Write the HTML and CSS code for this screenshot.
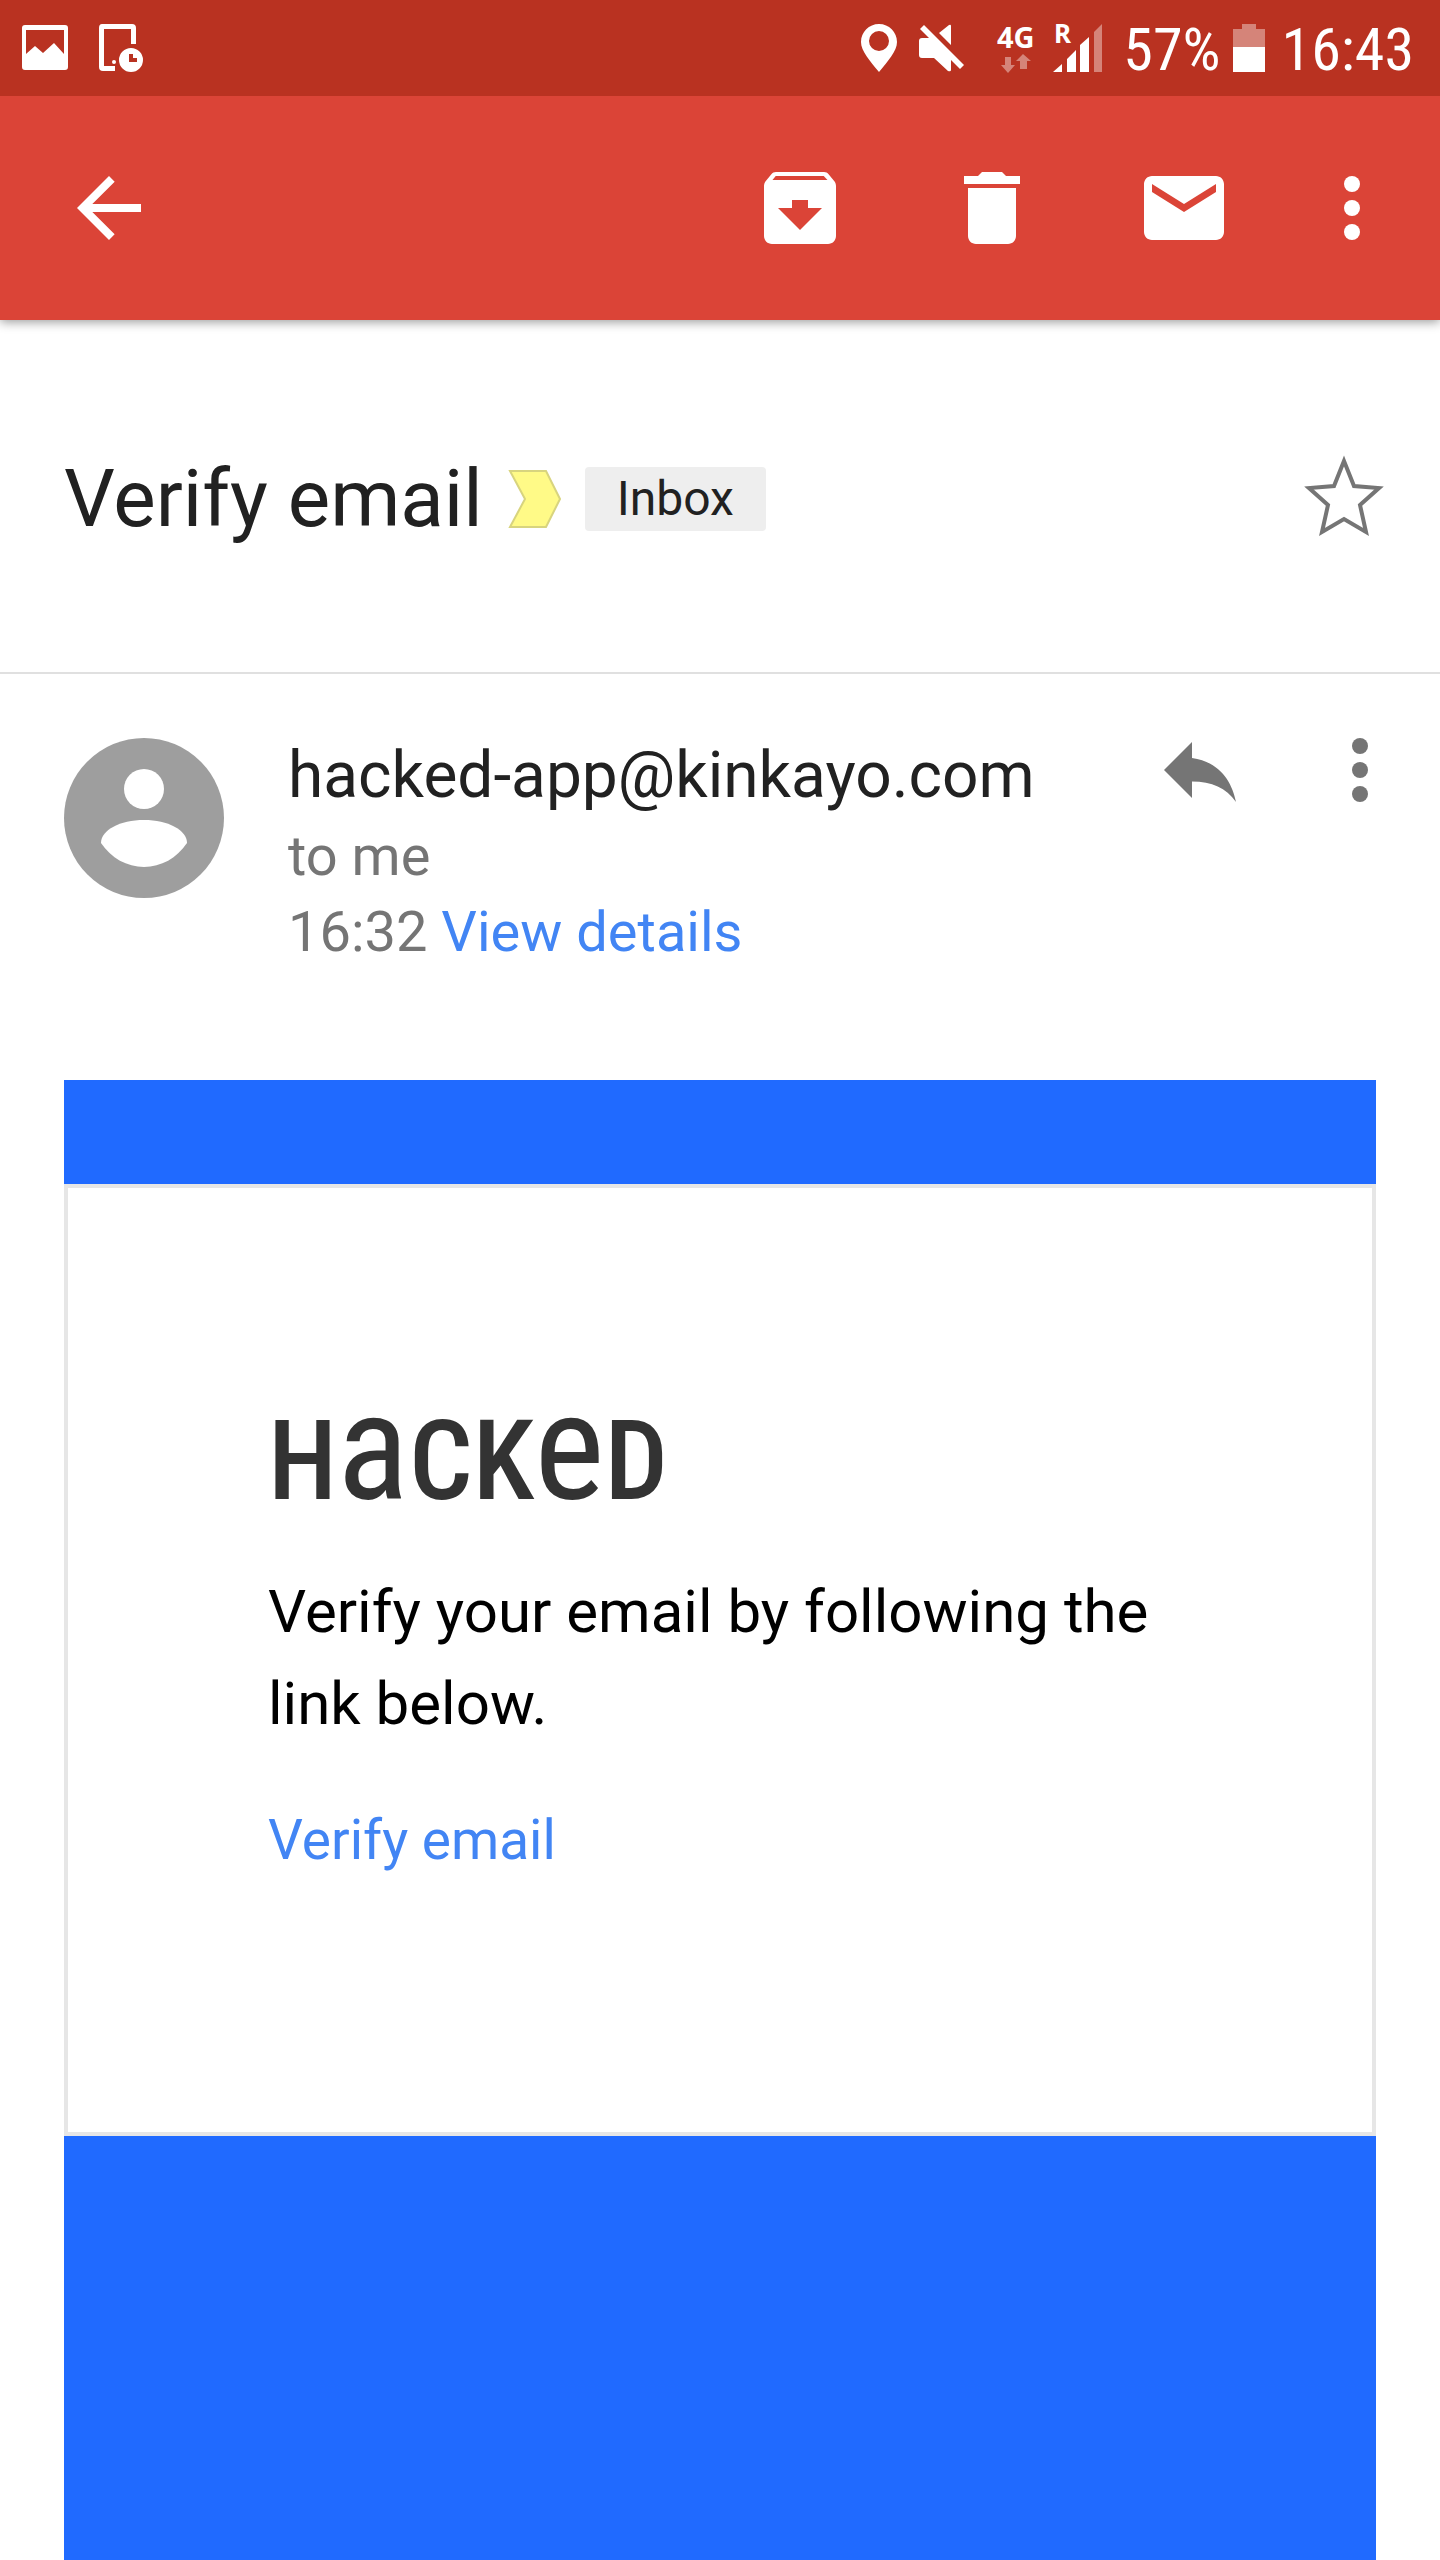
FILE: index.html
```html
<!DOCTYPE html>
<html lang="en">
<head>
<meta charset="utf-8">
<meta name="viewport" content="width=device-width">
<title>Verify email</title>
<link rel="stylesheet" href="styles.css">
</head>
<body>
<div class="status">
  <div class="status-group status-notices">
    <svg width="48" height="48" viewBox="0 0 48 48" fill="#fff"><path fill-rule="evenodd" d="M4 1h40q3 0 3 3v39q0 3-3 3H4q-3 0-3-3V4q0-3 3-3zM5 6v24l9-8 8 7 11-10 10 11V6z"/></svg>
    <svg width="48" height="48" viewBox="0 0 48 48" fill="#fff"><path d="M5 0h30q4 0 4 4v16h-5V5H7v37h11v5H6q-4 0-4-4V4q0-4 3-4z"/><circle cx="17" cy="38" r="2"/><path fill-rule="evenodd" d="M34 24a12 12 0 1 1 0 24 12 12 0 0 1 0-24zm-2 6v8h8v-4h-4v-4z"/></svg>
  </div>
  <div class="status-group">
    <svg width="36" height="48" viewBox="0 0 36 48" fill="#fff"><path fill-rule="evenodd" d="M18 0c10 0 18 8 18 18 0 9-9 19-18 30C9 37 0 27 0 18 0 8 8 0 18 0zm0 7a10 10 0 1 0 0 20 10 10 0 0 0 0-20z"/></svg>
    <svg class="mute" width="46" height="48" viewBox="0 0 46 48" fill="#fff"><path d="M20 9 30 1q2-1 2 1v19zM3 14h8l21 21v11q0 2-3 1L15 34H3q-3 0-3-3V17q0-3 3-3z"/><path d="M5 1 45 41l-4 4L1 5z"/></svg>
    <svg class="network" width="40" height="48" viewBox="0 0 40 48"><text class="net-label" x="0" y="24" font-size="29">4G</text><g fill="#fff" opacity=".4"><path d="M8 33h6v8h4l-7 8-7-8h4z"/><path d="M23 45h7v-8h4l-8-7-7 7h4z"/></g></svg>
    <svg class="signal" width="50" height="48" viewBox="0 0 50 48" fill="#fff"><text class="net-label" x="1" y="19" font-size="26">R</text><path d="M0 48h9v-8zM14 35l9-9v22h-9zM27 21l9-8v35h-9z"/><path opacity=".4" d="M41 8l8-8v48h-8z"/></svg>
    <span class="status-text">57%</span>
    <svg class="battery" width="32" height="48" viewBox="0 0 32 48" fill="#fff"><path opacity=".4" d="M9 0h14v5h9v18H0V5h9z"/><path d="M0 23h32v25H0z"/></svg>
    <span class="status-text">16:43</span>
  </div>
</div>
<header class="toolbar">
  <button class="icon-button" aria-label="Back"><svg viewBox="0 0 24 24"><path d="M20 11H7.83l5.59-5.59L12 4l-8 8 8 8 1.41-1.41L7.83 13H20z"/></svg></button>
  <div class="toolbar-actions">
    <button class="icon-button" aria-label="Archive"><svg viewBox="0 0 24 24"><path d="M20.54 5.23l-1.39-1.68C18.88 3.21 18.47 3 18 3H6c-.47 0-.88.21-1.16.55L3.46 5.23C3.17 5.57 3 6.02 3 6.5V19c0 1.1.9 2 2 2h14c1.1 0 2-.9 2-2V6.5c0-.48-.17-.93-.46-1.27zM12 17.5L6.5 12H10v-2h4v2h3.5L12 17.5zM5.12 5l.81-1h12l.94 1H5.12z"/></svg></button>
    <button class="icon-button" aria-label="Delete"><svg viewBox="0 0 24 24"><path d="M6 19c0 1.1.9 2 2 2h8c1.1 0 2-.9 2-2V7H6v12zM19 4h-3.500l-1-1h-5l-1 1H5v2h14V4z"/></svg></button>
    <button class="icon-button" aria-label="Mark unread"><svg viewBox="0 0 24 24"><path d="M20 4H4c-1.100 0-2 .9-2 2v12c0 1.100.9 2 2 2h16c1.100 0 2-.9 2-2V6c0-1.100-.9-2-2-2zm0 4l-8 5-8-5V6l8 5 8-5v2z"/></svg></button>
  </div>
  <button class="icon-button" aria-label="More options"><svg viewBox="0 0 24 24"><circle cx="12" cy="6" r="2"/><circle cx="12" cy="12" r="2"/><circle cx="12" cy="18" r="2"/></svg></button>
</header>
<main class="mail">
  <section class="subject">
    <div class="subject-line">
      <h1>Verify email</h1>
      <svg class="important" width="52" height="58" viewBox="0 0 52 58"><path d="M1 1h36l14 28-14 28H1l15-28z" fill="#fffa87" stroke="#d8d47e" stroke-width="2"/></svg>
      <span class="label">Inbox</span>
    </div>
    <button class="icon-button star" aria-label="Star"><svg viewBox="0 0 96 96"><path d="M48 13 58 38 83 40 64 57 70 84 48 71 26 84 32 57 13 40 38 38z" fill="none" stroke="#757575" stroke-width="4"/></svg></button>
  </section>
  <section class="sender">
    <svg class="avatar" width="160" height="160" viewBox="0 0 160 160"><circle cx="80" cy="80" r="80" fill="#9e9e9e"/><circle cx="80" cy="51" r="20" fill="#fff"/><path fill="#fff" d="M37 105C37 92 56 82 80 82s43 10 43 23c-10 15-26 24-43 24s-33-9-43-24z"/></svg>
    <div class="sender-info">
      <div class="address">hacked-app@kinkayo.com</div>
      <div class="meta">to me</div>
      <div class="meta">16:32 <a href="#">View details</a></div>
    </div>
    <div class="sender-actions">
      <button class="icon-button" aria-label="Reply"><svg viewBox="0 0 24 24"><path d="M10 9V5l-7 7 7 7v-4.100c5 0 8.500 1.600 11 5.100-1-5-4-10-11-11z"/></svg></button>
      <button class="icon-button" aria-label="More"><svg viewBox="0 0 24 24"><circle cx="12" cy="6" r="2"/><circle cx="12" cy="12" r="2"/><circle cx="12" cy="18" r="2"/></svg></button>
    </div>
  </section>
  <article class="message">
    <div class="card">
      <div class="logo"><span>H</span><span class="tall">a</span><span>CK</span><span class="tall">e</span><span>D</span></div>
      <p>Verify your email by following the link below.</p>
      <a class="verify" href="#">Verify email</a>
    </div>
  </article>
</main>
</body>
</html>
```
FILE: styles.css
```css
* { box-sizing: border-box; }
body {
  margin: 0;
  min-height: 100vh;
  display: flex;
  flex-direction: column;
  background: #fff;
  color: #212121;
  font-family: Roboto, "Liberation Sans", sans-serif;
}
svg { display: block; flex: none; overflow: visible; }
a { color: #4285f4; text-decoration: none; }
.status {
  position: relative;
  z-index: 1;
  height: 96px;
  padding: 0 26px 0 21px;
  display: flex;
  align-items: center;
  justify-content: space-between;
  background: #b93221;
}
.status-group { display: flex; align-items: center; }
.status-notices { gap: 28px; }
.status-text {
  padding-top: 4px;
  color: #fff;
  font: 60px/72px "Roboto Condensed", "Liberation Sans Narrow", Roboto, sans-serif;
}
.mute { margin-left: 22px; }
.network { margin-left: 32px; }
.signal { margin: 0 20px 0 16px; }
.battery { margin: 0 17px 0 12px; }
.net-label { fill: #fff; font-family: "Noto Sans", "Open Sans", sans-serif; font-weight: 700; }
.toolbar {
  position: relative;
  height: 224px;
  padding: 0 40px 0 61px;
  display: flex;
  align-items: center;
  background: #db4437;
  color: #fff;
  box-shadow: 0 2px 10px rgba(0, 0, 0, .4);
}
.toolbar-actions { display: flex; gap: 96px; margin: 0 72px 0 auto; }
.icon-button {
  flex: none;
  width: 96px;
  height: 96px;
  padding: 0;
  border: 0;
  background: none;
  color: inherit;
}
.icon-button svg { width: 96px; height: 96px; fill: currentColor; }
.mail { flex: 1; display: flex; flex-direction: column; }
.subject {
  height: 354px;
  padding: 0 48px 0 64px;
  display: flex;
  align-items: center;
  justify-content: space-between;
  border-bottom: 2px solid #e0e0e0;
}
.subject-line { display: flex; align-items: center; padding-top: 6px; }
h1 { margin: 0; font-size: 80px; line-height: 96px; font-weight: 400; }
.important { margin: 0 24px 0 26px; }
.label {
  padding: 0 32px;
  border-radius: 4px;
  background: #eee;
  font-size: 48px;
  line-height: 64px;
}
.sender { display: flex; padding: 64px 32px 110px 64px; color: #757575; }
.sender-actions { display: flex; gap: 64px; margin-top: -16px; }
.sender-info { flex: 1; margin-left: 64px; }
.address { margin-bottom: 4px; color: #212121; font-size: 64px; line-height: 76px; }
.meta { font-size: 56px; line-height: 76px; }
.message { flex: 1; margin: 0 64px; padding-top: 104px; background: #206aff; }
.card {
  padding: 200px 200px 246px;
  border: 4px solid #e6e6e6;
  background: #fff;
  color: #000;
}
.logo {
  height: 116px;
  color: #333;
  font: 500 112px/120px "Roboto Condensed", "Liberation Sans Narrow", Roboto, sans-serif;
  white-space: nowrap;
}
.tall { font-size: 150px; font-weight: 400; }
.card p { margin: 62px 0 44px; font-size: 60px; line-height: 92px; }
.verify { display: block; font-size: 55px; line-height: 92px; }
```
